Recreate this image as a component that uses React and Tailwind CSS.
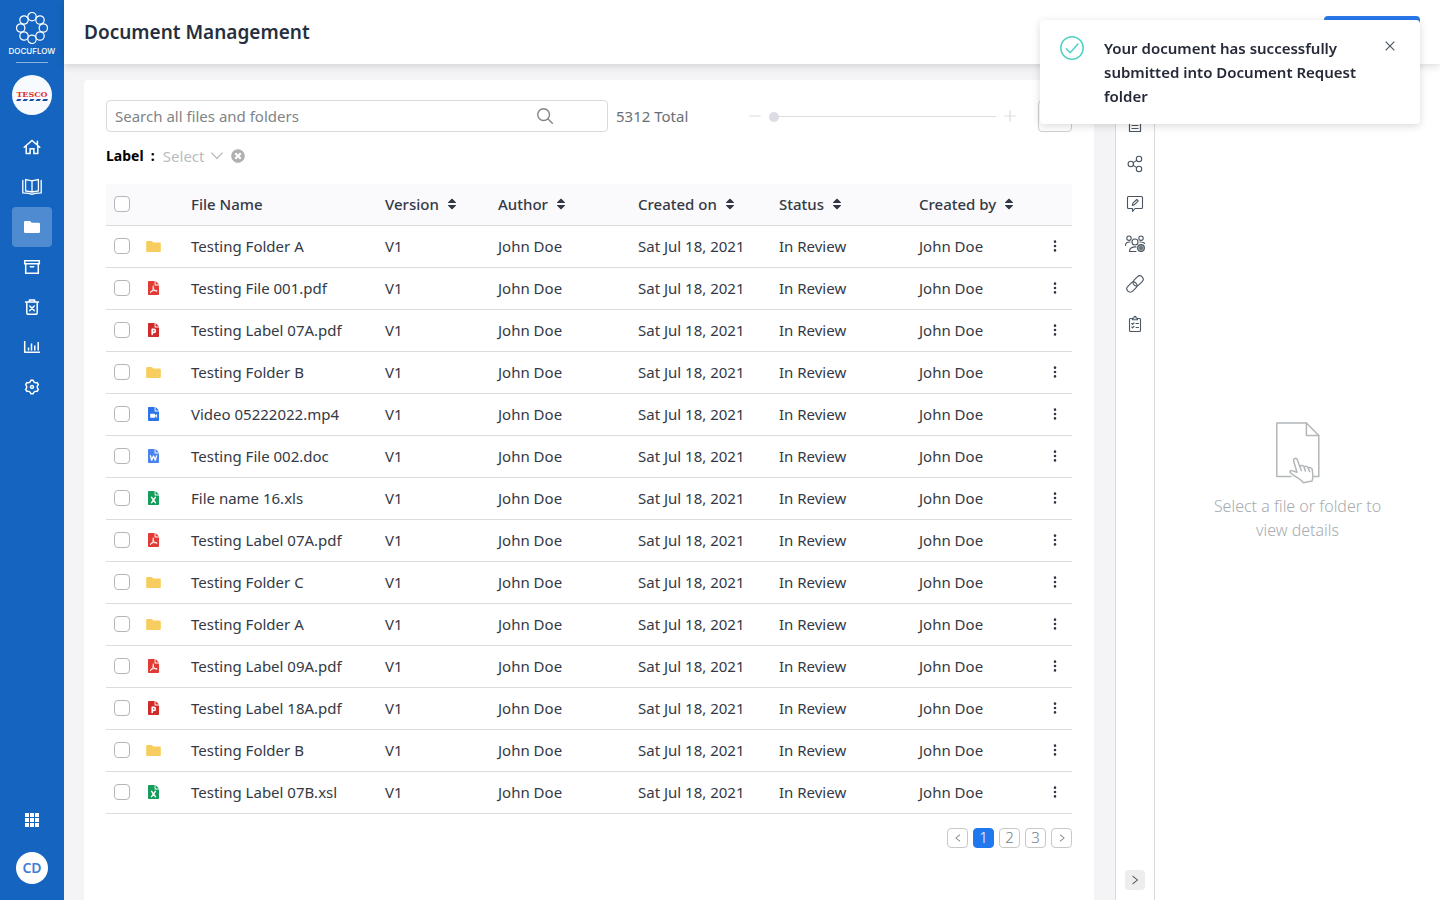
import React from "react";
import {
  AiOutlineLeft,
  AiOutlineRight,
  AiOutlineClose,
  AiOutlineMinus,
  AiOutlinePlus,
} from "react-icons/ai";
import { RiSettings3Line } from "react-icons/ri";
import { FaTimesCircle } from "react-icons/fa";
import { BsThreeDotsVertical } from "react-icons/bs";

const line = {
  fill: "none",
  stroke: "currentColor",
  strokeLinecap: "round",
  strokeLinejoin: "round",
};

function Logo() {
  const angles = [0, 45, 90, 135, 180, 225, 270, 315];
  return (
    <svg className="size-8" viewBox="0 0 32 32" {...line} strokeWidth="1.2">
      {angles.map((a) => (
        <circle
          key={a}
          cx={16 + 11.3 * Math.cos((a * Math.PI) / 180)}
          cy={16 + 11.3 * Math.sin((a * Math.PI) / 180)}
          r="4.2"
        />
      ))}
    </svg>
  );
}

function HomeIcon() {
  return (
    <svg className="size-5" viewBox="0 0 20 20" {...line} strokeWidth="1.5" strokeLinejoin="miter">
      <path d="M2.2 10.2 10 3.4l7.8 6.8M15.4 7.6V4.2M4.200 9v7.600h3.900v-4.800h3.800v4.800h3.900V9" />
    </svg>
  );
}

function BookIcon() {
  return (
    <svg className="size-5" viewBox="0 0 20 20" {...line} strokeWidth="1.3" strokeLinejoin="miter">
      <path d="M10 3.900 3.600 2.600v11.400L10 15l6.400-1V2.600L10 3.900V15" />
      <path d="M.8 3.400v12.400c3 .2 7.200.6 9.200 1.500 2-.9 6.200-1.300 9.200-1.500V3.400" />
    </svg>
  );
}

function FolderIcon({ className }) {
  return (
    <svg className={className} viewBox="0 0 16 12" fill="currentColor">
      <path d="M1.2 0h4.600a1 1 0 0 1 .8.4l1 1.300h7.200A1.200 1.200 0 0 1 16 2.900v7.900a1.200 1.200 0 0 1-1.200 1.200H1.200A1.200 1.200 0 0 1 0 10.800V1.200A1.200 1.200 0 0 1 1.200 0Z" />
    </svg>
  );
}

function ArchiveIcon() {
  return (
    <svg className="size-5" viewBox="0 0 20 20" {...line} strokeWidth="1.5" strokeLinejoin="miter">
      <path d="M2.700 3.700h14.600v3H2.700zM3.700 6.700v9.600h12.600V6.700M8.300 9.700h3.400" />
    </svg>
  );
}

function TrashIcon() {
  return (
    <svg className="size-5" viewBox="0 0 20 20" {...line} strokeWidth="1.500">
      <path d="M3.500 5h13M7.400 4.800V3h5.200v1.800M4.800 5v11.300a1 1 0 0 0 1 1h8.400a1 1 0 0 0 1-1V5M7.800 9l4.400 4.600M12.200 9l-4.400 4.600" />
    </svg>
  );
}

function ChartIcon() {
  return (
    <svg className="size-5" viewBox="0 0 20 20" {...line} strokeWidth="1.500" strokeLinecap="butt">
      <path d="M2.700 4v11.300H18M6.500 13.500v-3M9.500 13.500V6.500M12.800 13.500V8.500M16.200 13.500V5" />
    </svg>
  );
}

function GridIcon() {
  const cells = [0, 5, 10];
  return (
    <svg className="size-3.5" viewBox="0 0 14 14" fill="currentColor">
      {cells.map((y) => cells.map((x) => <rect key={`${x}-${y}`} x={x} y={y} width="4" height="4" />))}
    </svg>
  );
}

function SearchIcon() {
  return (
    <svg className="size-4" viewBox="0 0 16 16" {...line} strokeWidth="1.400">
      <circle cx="6.600" cy="6.600" r="5.900" />
      <path d="m11 11 4.300 4.300" />
    </svg>
  );
}

function ChevronIcon() {
  return (
    <svg className="h-2 w-3" viewBox="0 0 12 8" {...line} strokeWidth="1.200">
      <path d="m.8 1 5.200 5.500L11.200 1" />
    </svg>
  );
}

function SuccessIcon() {
  return (
    <svg className="size-6 shrink-0 text-[#4fd1c5]" viewBox="0 0 24 24" {...line} strokeWidth="1.500">
      <circle cx="12" cy="12" r="11.200" />
      <path d="m6.300 12.800 3.900 3.900 7.700-8.700" />
    </svg>
  );
}

function SortIcon() {
  return (
    <svg className="h-3 w-2.5" viewBox="0 0 10 12" fill="currentColor" stroke="currentColor" strokeWidth="1" strokeLinejoin="round">
      <path d="M5 .9 8.700 4.500H1.300zM5 11.100 8.700 7.500H1.300z" />
    </svg>
  );
}

const fileColors = {
  pdf: "text-[#e23b35]",
  ppt: "text-[#cf2b2b]",
  video: "text-[#2a73e8]",
  doc: "text-[#4a83ee]",
  xls: "text-[#179c5b]",
};

const fileMarks = {
  pdf: <path d="M5.200 5v2c0 1.600-1.200 3.800-2.800 4.500M5.200 7c.4 1.800 1.900 3 3.700 3M2.900 10.400c1.500-.9 3.900-1.100 5.700-.5" />,
  ppt: <path d="M4.200 11.400V6.400h1.700a1.500 1.500 0 0 1 0 3H4.200" strokeWidth="1.600" />,
  video: (
    <>
      <rect x="2.200" y="6.800" width="4.800" height="4" rx=".4" fill="#fff" stroke="none" />
      <path d="m6.900 8.800 1.900-1.600v3.200z" fill="#fff" strokeWidth=".4" />
    </>
  ),
  doc: <path d="m2.400 6.800 1.300 4.400 1.800-4.200 1.800 4.200 1.300-4.400" strokeWidth="1.300" />,
  xls: <path d="m3.600 6.400 3.800 5.200M7.400 6.400l-3.800 5.200" strokeWidth="1.500" />,
};

function FileIcon({ kind }) {
  if (kind === "folder") return <FolderIcon className="h-[11px] w-[15px] text-[#f8cd5f]" />;
  return (
    <svg className={`mx-0.5 h-3.5 w-[11px] ${fileColors[kind]}`} viewBox="0 0 11 14">
      <path fill="currentColor" d="M.8 0h5.800v4.400H11v8.800a.8.8 0 0 1-.8.8H.8a.8.8 0 0 1-.8-.8V.8A.8.8 0 0 1 .8 0ZM7.500 0 11 3.500H7.500z" />
      <g fill="none" stroke="#fff" strokeLinejoin="round" strokeLinecap="round" strokeWidth="1">
        {fileMarks[kind]}
      </g>
    </svg>
  );
}

function DetailsIcon() {
  return (
    <svg className="size-5" viewBox="0 0 20 20" {...line} strokeWidth="1.200">
      <path d="M4.500 2.500h11v15h-11zM7 11.500h6M7 14.500h6M7 6.500h6" />
    </svg>
  );
}

function ShareIcon() {
  return (
    <svg className="size-5" viewBox="0 0 20 20" {...line} strokeWidth="1.100">
      <circle cx="5.800" cy="10" r="2.700" />
      <circle cx="14" cy="5" r="2.700" />
      <circle cx="14" cy="15" r="2.700" />
      <path d="m8.200 8.600 3.500-2.200M8.200 11.400l3.500 2.200" />
    </svg>
  );
}

function CommentIcon() {
  return (
    <svg className="size-5" viewBox="0 0 20 20" {...line} strokeWidth="1.100">
      <path d="M3.500 2.500h13a1 1 0 0 1 1 1v10a1 1 0 0 1-1 1H10L7.500 17.300v-2.800h-4a1 1 0 0 1-1-1v-10a1 1 0 0 1 1-1Z" />
      <path d="m7.300 11.400.6-2.200L11.800 5.500l1.400 1.400-3.900 3.900z" />
    </svg>
  );
}

function TeamIcon() {
  return (
    <svg className="size-5" viewBox="0 0 20 20" {...line} strokeWidth="1.100">
      <circle cx="4" cy="4.200" r="2.200" />
      <circle cx="16" cy="4.200" r="2.200" />
      <circle cx="10" cy="8" r="3" />
      <path d="M.5 11.500c0-2.500 1.500-3.500 4.500-3.500M19.500 9.500C19 8.200 17.500 8 15 8M4.500 17.500c0-3.200 2-4.600 6.500-4.600M4.500 17.500H11" />
      <circle cx="16" cy="14" r="3.400" fill="#a3adb0" />
      <circle cx="16" cy="14" r="1.200" />
    </svg>
  );
}

function LinkIcon() {
  return (
    <svg className="size-5" viewBox="0 0 20 20" {...line} strokeWidth="1.100">
      <rect x="7.400" y="3.500" width="11.400" height="6.800" rx="3.400" transform="rotate(-45 13.100 6.900)" />
      <rect x="1.200" y="9.700" width="11.400" height="6.800" rx="3.400" transform="rotate(-45 6.900 13.100)" />
    </svg>
  );
}

function ChecklistIcon() {
  return (
    <svg className="size-5" viewBox="0 0 20 20" {...line} strokeWidth="1.100">
      <path d="M7.500 4.500h-2a1 1 0 0 0-1 1v11a1 1 0 0 0 1 1h9a1 1 0 0 0 1-1v-11a1 1 0 0 0-1-1h-2M7.500 5.800V4.200h1.300c0-2.400 2.400-2.400 2.400 0h1.300v1.600zM6.800 9.500l.8.800 1.400-1.500M6.800 13l.8.800L9 12.300M11 9.500h2.500M11 13.500h2.500" />
    </svg>
  );
}

function PickFileDrawing() {
  return (
    <svg className="h-[62px] w-11" viewBox="0 0 44 62" fill="none" stroke="#b3b7b9" strokeWidth="1.500" strokeLinejoin="round" strokeLinecap="round">
      <path d="M15 54.500H.8V1h29.600L42.800 13.500v41H38" />
      <path d="M30.400 1v12.500h12.400" />
      <path
        fill="#fff"
        d="M27.400 60.800c-1.500-2.500-4.500-4.200-6.700-5.600-2.700-1.700-5.200-3.400-6.500-4.800-.8-1.100.2-2.100 1.500-1.800l5.300 1.600-3.400-11.200c-.5-2.800 2.700-3.700 3.700-1.200l2.500 6.600c1.500-1.600 3.800-1 4.300.6 1.500-1.200 3.600-.6 4.200.9 1.900-.8 3.600.2 4 1.800l.6 6.700c.2 1.600-.8 3.300-.8 4.600Z"
      />
      <path d="m23.800 44.400 1.500 4.200M28.100 45l1.300 4M32.300 45.900l1.200 3.600" />
    </svg>
  );
}

const navItems = [
  ["Home", <HomeIcon />],
  ["Library", <BookIcon />],
  ["Documents", <FolderIcon className="h-3 w-4" />],
  ["Archive", <ArchiveIcon />],
  ["Trash", <TrashIcon />],
  ["Reports", <ChartIcon />],
  ["Settings", <RiSettings3Line className="size-[18px]" />],
];

const tools = [
  ["Details", <DetailsIcon />],
  ["Share", <ShareIcon />],
  ["Comments", <CommentIcon />],
  ["Permissions", <TeamIcon />],
  ["Links", <LinkIcon />],
  ["Tasks", <ChecklistIcon />],
];

const files = [
  ["folder", "Testing Folder A"],
  ["pdf", "Testing File 001.pdf"],
  ["ppt", "Testing Label 07A.pdf"],
  ["folder", "Testing Folder B"],
  ["video", "Video 05222022.mp4"],
  ["doc", "Testing File 002.doc"],
  ["xls", "File name 16.xls"],
  ["pdf", "Testing Label 07A.pdf"],
  ["folder", "Testing Folder C"],
  ["folder", "Testing Folder A"],
  ["pdf", "Testing Label 09A.pdf"],
  ["ppt", "Testing Label 18A.pdf"],
  ["folder", "Testing Folder B"],
  ["xls", "Testing Label 07B.xsl"],
];

const sortable = ["Version", "Author", "Created on", "Status", "Created by"];

function Checkbox({ label }) {
  return (
    <input
      type="checkbox"
      aria-label={label}
      className="ml-2 block size-4 appearance-none rounded border border-[#b4b4ba] bg-white checked:bg-[#1f78ee]"
    />
  );
}

function Sidebar() {
  return (
    <aside className="flex w-16 shrink-0 flex-col items-center bg-[#1565c0] pt-3 pb-4 text-white">
      <Logo />
      <div className="font-[Inter,sans-serif] text-[8px] leading-[14px] font-medium">DOCUFLOW</div>
      <div className="mt-1 h-px w-8 bg-white/50" />
      <a href="#tesco" className="mt-3 flex size-10 shrink-0 flex-col items-center justify-center rounded-full bg-[#f7fbff]">
        <span className="font-['DejaVu_Serif',serif] text-[8px] leading-[10px] font-bold text-[#e0322c]">TESCO</span>
        <svg className="h-0.5 w-8" viewBox="0 0 32 2" fill="#1b4f9c">
          <path d="M1.500 0h4L4 2H0zM8 0h4l-1.500 2h-4zM14.500 0h4L17 2h-4zM21 0h4l-1.500 2h-4zM27.500 0h4.500l-1 2h-5z" />
        </svg>
      </a>
      <nav className="mt-3 flex flex-col" aria-label="Main">
        {navItems.map(([label, icon]) => (
          <a
            key={label}
            href={`#${label.toLowerCase()}`}
            aria-label={label}
            className={`flex size-10 items-center justify-center rounded ${label === "Documents" ? "bg-white/25" : ""}`}
          >
            {icon}
          </a>
        ))}
      </nav>
      <button type="button" aria-label="Apps" className="mt-auto mb-3 flex size-10 items-center justify-center">
        <GridIcon />
      </button>
      <button type="button" className="flex size-8 shrink-0 items-center justify-center rounded-full bg-white text-sm font-semibold text-[#3f7fd6]">
        CD
      </button>
    </aside>
  );
}

function Toolbar() {
  return (
    <div className="flex items-center">
      <div className="flex h-8 w-[502px] min-w-0 items-center rounded border border-[#d9d9de] pl-2">
        <input
          type="text"
          aria-label="Search all files and folders"
          placeholder="Search all files and folders"
          className="min-w-0 flex-1 text-[15px] text-[#2d3340] outline-none placeholder:text-[#808488]"
        />
        <button type="button" aria-label="Search" className="mr-[54px] text-[#808488]">
          <SearchIcon />
        </button>
      </div>
      <span className="ml-2 text-[15px] text-[#6a6f75]">5312 Total</span>
      <div className="ml-auto flex items-center gap-1.5 text-[#dcdce2]">
        <button type="button" aria-label="Smaller">
          <AiOutlineMinus className="size-4" />
        </button>
        <input
          type="range"
          aria-label="Zoom"
          defaultValue="0"
          className="h-2.5 w-[227px] appearance-none bg-transparent [&::-webkit-slider-runnable-track]:h-px [&::-webkit-slider-runnable-track]:bg-[#dcdce2] [&::-webkit-slider-thumb]:-mt-1 [&::-webkit-slider-thumb]:size-2.5 [&::-webkit-slider-thumb]:appearance-none [&::-webkit-slider-thumb]:rounded-full [&::-webkit-slider-thumb]:bg-[#dcdce4]"
        />
        <button type="button" aria-label="Larger">
          <AiOutlinePlus className="size-4" />
        </button>
      </div>
      <button type="button" aria-label="Change view" className="ml-5 h-8 w-[34px] rounded border border-[#cfcfd5]" />
    </div>
  );
}

function LabelFilter() {
  return (
    <div className="mt-3 flex h-6 items-center text-[15px]">
      <label htmlFor="label-filter" className="text-sm font-bold text-black">
        Label &nbsp;:
      </label>
      <div className="ml-2 flex items-center text-[#b9bcc0]">
        <select id="label-filter" className="appearance-none bg-transparent outline-none">
          <option>Select</option>
        </select>
        <span className="ml-1.5">
          <ChevronIcon />
        </span>
      </div>
      <button type="button" aria-label="Clear label" className="ml-2 text-[#b0b0b3]">
        <FaTimesCircle className="size-3.5" />
      </button>
    </div>
  );
}

function FileTable() {
  return (
    <table className="mt-4 w-full table-fixed border-collapse text-left text-[15px] text-[#343945]">
      <colgroup>
        <col className="w-10" />
        <col className="w-[45px]" />
        <col className="w-[194px]" />
        <col className="w-[113px]" />
        <col className="w-[140px]" />
        <col className="w-[141px]" />
        <col className="w-[140px]" />
        <col className="w-[119px]" />
        <col className="w-[34px]" />
      </colgroup>
      <thead>
        <tr className="h-[41px] border-b border-[#dcdce0] bg-[#fafafc]">
          <th>
            <Checkbox label="Select all" />
          </th>
          <th aria-label="Type" />
          <th className="font-medium">File Name</th>
          {sortable.map((name) => (
            <th key={name} className="font-medium">
              <button type="button" className="flex items-center gap-2 whitespace-nowrap">
                {name}
                <SortIcon />
              </button>
            </th>
          ))}
          <th aria-label="Actions" />
        </tr>
      </thead>
      <tbody>
        {files.map(([kind, name], i) => (
          <tr key={i} className="h-[42px] border-b border-[#dcdce0]">
            <td>
              <Checkbox label={`Select ${name}`} />
            </td>
            <td>
              <FileIcon kind={kind} />
            </td>
            <td className="whitespace-nowrap">{name}</td>
            <td>V1</td>
            <td>John Doe</td>
            <td className="whitespace-nowrap">Sat Jul 18, 2021</td>
            <td>In Review</td>
            <td>John Doe</td>
            <td>
              <button type="button" aria-label={`Actions for ${name}`} className="ml-2.5 block">
                <BsThreeDotsVertical className="size-3.5" />
              </button>
            </td>
          </tr>
        ))}
      </tbody>
    </table>
  );
}

const pageButton = "flex h-5 w-[21px] items-center justify-center rounded border";

function Pagination() {
  return (
    <nav aria-label="Pages" className="mt-3.5 flex justify-end gap-[5px] text-[15px] font-light text-[#777b80]">
      <button type="button" aria-label="Previous page" className={`${pageButton} border-[#c8c8c8]`}>
        <AiOutlineLeft className="size-2.5" />
      </button>
      <button type="button" aria-current="page" className={`${pageButton} border-[#1f78ee] bg-[#1f78ee] text-white`}>
        1
      </button>
      <button type="button" className={`${pageButton} border-[#c8c8c8]`}>
        2
      </button>
      <button type="button" className={`${pageButton} border-[#c8c8c8]`}>
        3
      </button>
      <button type="button" aria-label="Next page" className={`${pageButton} border-[#c8c8c8]`}>
        <AiOutlineRight className="size-2.5" />
      </button>
    </nav>
  );
}

function DetailsPanel() {
  return (
    <div className="flex w-[325px] shrink-0 bg-white text-[#4b5560]">
      <div className="flex w-10 flex-col items-center border-x border-[#d9dadc] pt-10 pb-2.5">
        {tools.map(([label, icon]) => (
          <button key={label} type="button" aria-label={label} className="flex size-10 w-full items-center justify-center">
            {icon}
          </button>
        ))}
        <button type="button" aria-label="Collapse panel" className="mt-auto flex size-5 items-center justify-center rounded bg-[#ededee]">
          <AiOutlineRight className="size-3" />
        </button>
      </div>
      <section className="flex flex-1 flex-col items-center justify-center">
        <PickFileDrawing />
        <p className="mt-2.5 max-w-[200px] text-center text-base font-light text-[#a6abb0]">Select a file or folder to view details</p>
      </section>
    </div>
  );
}

function Toast() {
  return (
    <div role="status" className="fixed top-5 right-5 z-20 flex w-[380px] items-start rounded bg-white px-5 py-4 shadow-[0_2px_8px_rgba(0,0,0,0.15)]">
      <SuccessIcon />
      <p className="ml-5 w-[262px] text-[15px] leading-6 font-semibold text-[#262a38]">
        Your document has successfully submitted into Document Request folder
      </p>
      <button type="button" aria-label="Close" className="mt-[3px] ml-auto mr-[3px]">
        <AiOutlineClose className="size-3.5 text-[#4b5560]" />
      </button>
    </div>
  );
}

export default function App() {
  return (
    <div className="flex h-screen overflow-hidden bg-[#f4f4f7] font-['Noto_Sans',sans-serif]">
      <Sidebar />
      <div className="flex min-w-0 flex-1 flex-col">
        <header className="z-10 flex h-16 shrink-0 items-start justify-between bg-white px-5 py-4 shadow-[0_2px_8px_rgba(0,0,0,0.15)]">
          <h1 className="text-[19px] leading-8 font-semibold text-[#262f3e]">Document Management</h1>
          <button type="button" aria-label="New document" className="h-8 w-24 rounded bg-[#2878eb]" />
        </header>
        <div className="flex min-h-0 flex-1">
          <main className="mt-4 mr-[21px] ml-5 min-w-0 flex-1 rounded-t bg-white px-[22px] pt-5">
            <Toolbar />
            <LabelFilter />
            <FileTable />
            <Pagination />
          </main>
          <DetailsPanel />
        </div>
      </div>
      <Toast />
    </div>
  );
}
